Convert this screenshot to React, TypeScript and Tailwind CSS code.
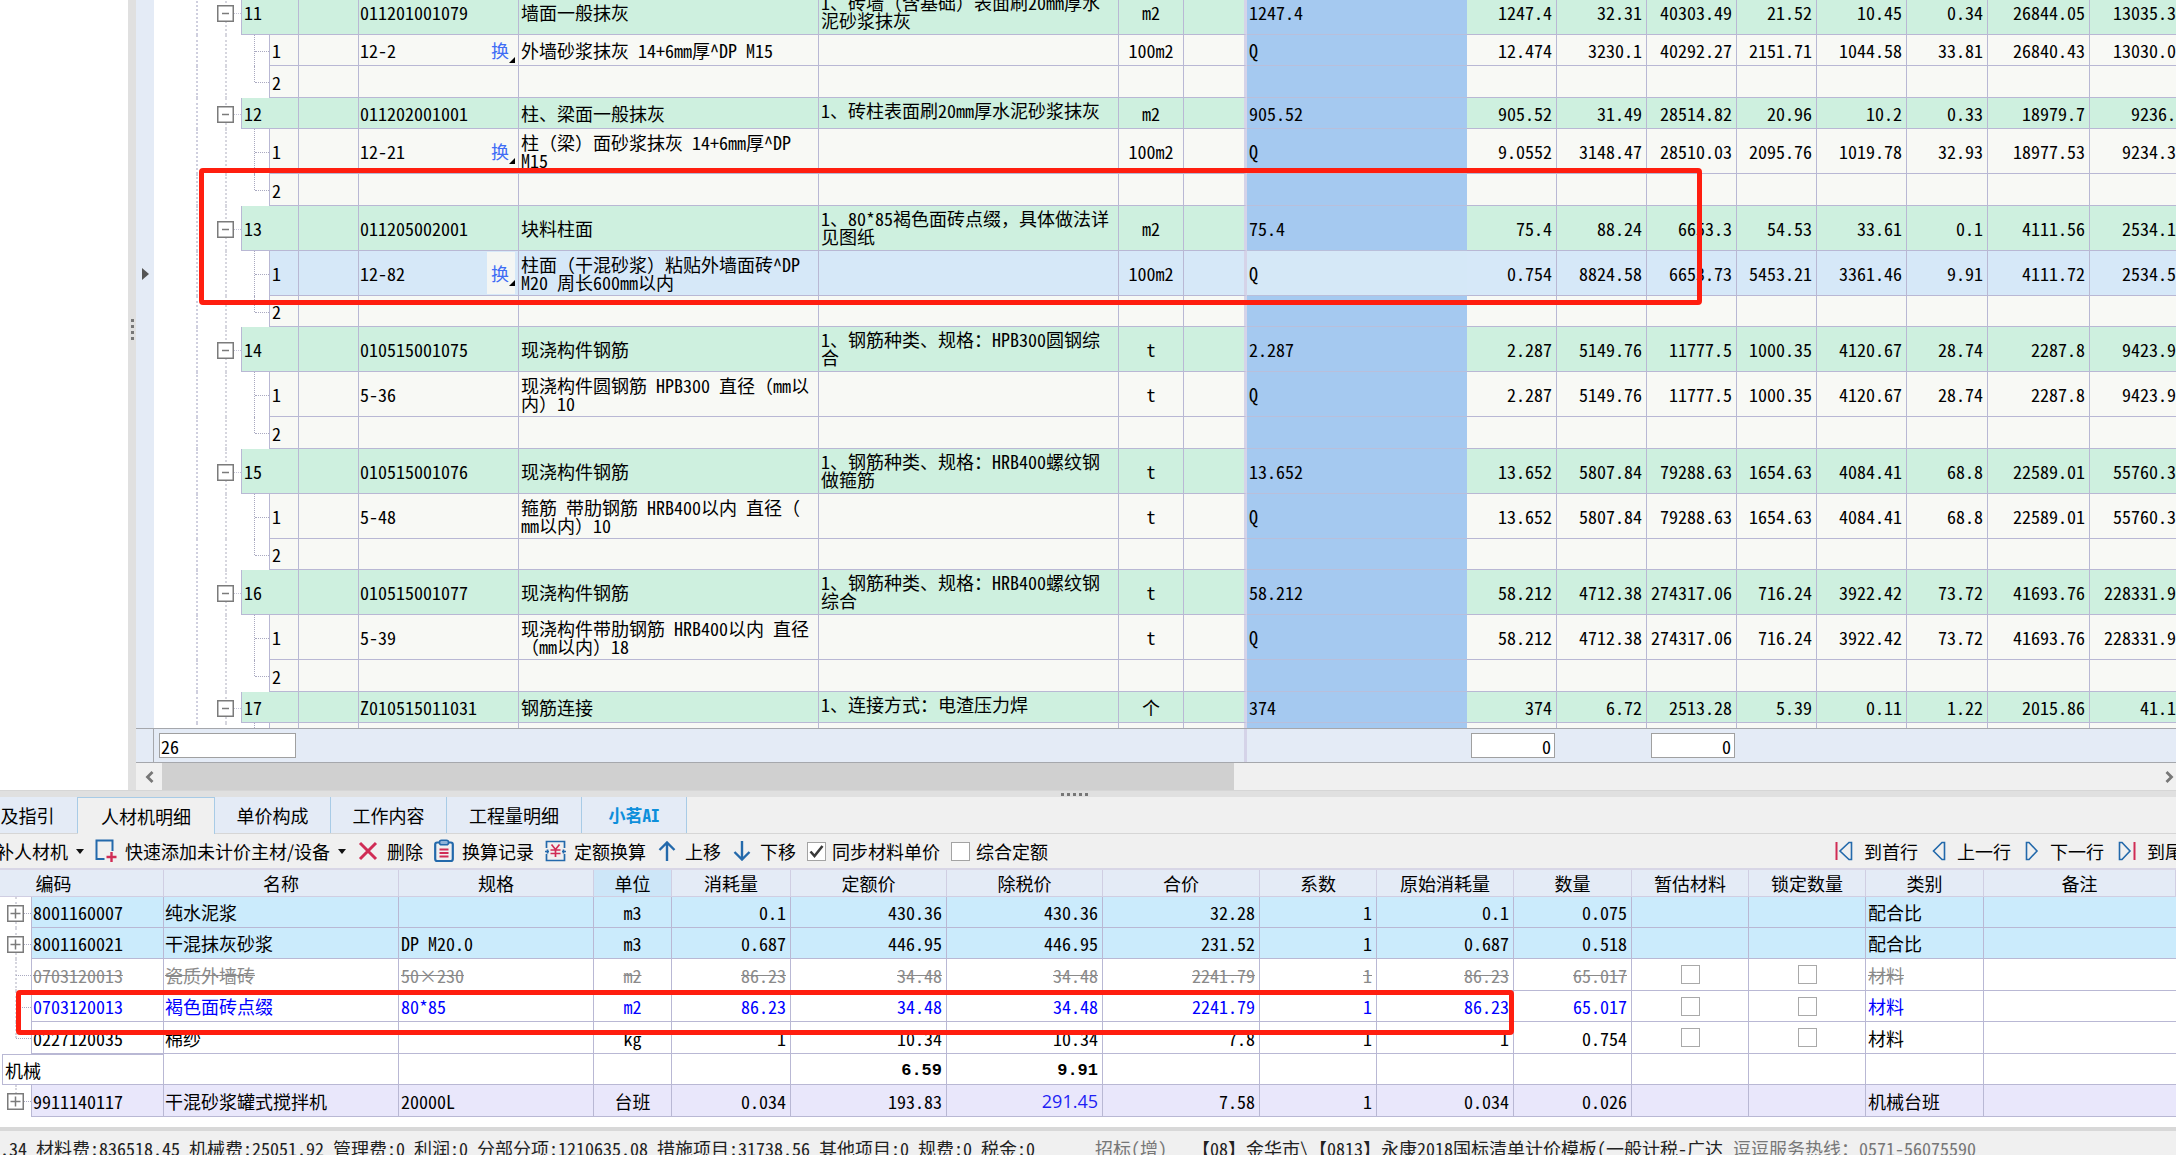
import React from 'react';
import clsx from 'clsx';

type RowKind = 'item' | 'sub' | 'last';

interface CostRow {
  kind: RowKind;
  no: string;
  height: string;
  code?: string;
  swap?: boolean;
  name?: string;
  desc?: string;
  unit?: string;
  expr?: string;
  values?: string[];
  selected?: boolean;
}

interface MaterialRow {
  code: string;
  name: string;
  spec: string;
  unit: string;
  values: string[];
  category: string;
  height: string;
  tone: 'mix' | 'deleted' | 'changed' | 'plain' | 'machine';
  last?: boolean;
}

const SHORT = 'h-[31px]';
const BLANK = 'h-[32px]';
const TALL = 'h-[45px]';

const costRows: CostRow[] = [
  { kind: 'item', no: '11', height: TALL, code: '011201001079', name: '墙面一般抹灰', desc: '1、砖墙（含基础）表面刷20mm厚水\n泥砂浆抹灰', unit: 'm2', expr: '1247.4', values: ['1247.4', '32.31', '40303.49', '21.52', '10.45', '0.34', '26844.05', '13035.3'] },
  { kind: 'sub', no: '1', height: SHORT, code: '12-2', swap: true, name: '外墙砂浆抹灰 14+6mm厚^DP M15', unit: '100m2', expr: 'Q', values: ['12.474', '3230.1', '40292.27', '2151.71', '1044.58', '33.81', '26840.43', '13030.0'] },
  { kind: 'last', no: '2', height: BLANK },
  { kind: 'item', no: '12', height: SHORT, code: '011202001001', name: '柱、梁面一般抹灰', desc: '1、砖柱表面刷20mm厚水泥砂浆抹灰', unit: 'm2', expr: '905.52', values: ['905.52', '31.49', '28514.82', '20.96', '10.2', '0.33', '18979.7', '9236.'] },
  { kind: 'sub', no: '1', height: TALL, code: '12-21', swap: true, name: '柱（梁）面砂浆抹灰 14+6mm厚^DP\nM15', unit: '100m2', expr: 'Q', values: ['9.0552', '3148.47', '28510.03', '2095.76', '1019.78', '32.93', '18977.53', '9234.3'] },
  { kind: 'last', no: '2', height: BLANK },
  { kind: 'item', no: '13', height: TALL, code: '011205002001', name: '块料柱面', desc: '1、80*85褐色面砖点缀，具体做法详\n见图纸', unit: 'm2', expr: '75.4', values: ['75.4', '88.24', '6653.3', '54.53', '33.61', '0.1', '4111.56', '2534.1'] },
  { kind: 'sub', no: '1', height: TALL, code: '12-82', swap: true, name: '柱面（干混砂浆）粘贴外墙面砖^DP\nM20 周长600mm以内', unit: '100m2', expr: 'Q', values: ['0.754', '8824.58', '6653.73', '5453.21', '3361.46', '9.91', '4111.72', '2534.5'], selected: true },
  { kind: 'last', no: '2', height: SHORT },
  { kind: 'item', no: '14', height: TALL, code: '010515001075', name: '现浇构件钢筋', desc: '1、钢筋种类、规格：HPB300圆钢综\n合', unit: 't', expr: '2.287', values: ['2.287', '5149.76', '11777.5', '1000.35', '4120.67', '28.74', '2287.8', '9423.9'] },
  { kind: 'sub', no: '1', height: TALL, code: '5-36', name: '现浇构件圆钢筋 HPB300 直径（mm以\n内）10', unit: 't', expr: 'Q', values: ['2.287', '5149.76', '11777.5', '1000.35', '4120.67', '28.74', '2287.8', '9423.9'] },
  { kind: 'last', no: '2', height: BLANK },
  { kind: 'item', no: '15', height: TALL, code: '010515001076', name: '现浇构件钢筋', desc: '1、钢筋种类、规格：HRB400螺纹钢\n做箍筋', unit: 't', expr: '13.652', values: ['13.652', '5807.84', '79288.63', '1654.63', '4084.41', '68.8', '22589.01', '55760.3'] },
  { kind: 'sub', no: '1', height: TALL, code: '5-48', name: '箍筋 带肋钢筋 HRB400以内 直径（\nmm以内）10', unit: 't', expr: 'Q', values: ['13.652', '5807.84', '79288.63', '1654.63', '4084.41', '68.8', '22589.01', '55760.3'] },
  { kind: 'last', no: '2', height: SHORT },
  { kind: 'item', no: '16', height: TALL, code: '010515001077', name: '现浇构件钢筋', desc: '1、钢筋种类、规格：HRB400螺纹钢\n综合', unit: 't', expr: '58.212', values: ['58.212', '4712.38', '274317.06', '716.24', '3922.42', '73.72', '41693.76', '228331.9'] },
  { kind: 'sub', no: '1', height: TALL, code: '5-39', name: '现浇构件带肋钢筋 HRB400以内 直径\n（mm以内）18', unit: 't', expr: 'Q', values: ['58.212', '4712.38', '274317.06', '716.24', '3922.42', '73.72', '41693.76', '228331.9'] },
  { kind: 'last', no: '2', height: BLANK },
  { kind: 'item', no: '17', height: SHORT, code: 'Z010515011031', name: '钢筋连接', desc: '1、连接方式：电渣压力焊', unit: '个', expr: '374', values: ['374', '6.72', '2513.28', '5.39', '0.11', '1.22', '2015.86', '41.1'] },
  { kind: 'sub', no: '', height: SHORT },
];

const materialRows: MaterialRow[] = [
  { code: '8001160007', name: '纯水泥浆', spec: '', unit: 'm3', values: ['0.1', '430.36', '430.36', '32.28', '1', '0.1', '0.075'], category: '配合比', height: SHORT, tone: 'mix' },
  { code: '8001160021', name: '干混抹灰砂浆', spec: 'DP M20.0', unit: 'm3', values: ['0.687', '446.95', '446.95', '231.52', '1', '0.687', '0.518'], category: '配合比', height: SHORT, tone: 'mix' },
  { code: '0703120013', name: '瓷质外墙砖', spec: '50×230', unit: 'm2', values: ['86.23', '34.48', '34.48', '2241.79', '1', '86.23', '65.017'], category: '材料', height: BLANK, tone: 'deleted' },
  { code: '0703120013', name: '褐色面砖点缀', spec: '80*85', unit: 'm2', values: ['86.23', '34.48', '34.48', '2241.79', '1', '86.23', '65.017'], category: '材料', height: SHORT, tone: 'changed' },
  { code: '0227120035', name: '棉纱', spec: '', unit: 'kg', values: ['1', '10.34', '10.34', '7.8', '1', '1', '0.754'], category: '材料', height: BLANK, tone: 'plain', last: true },
];

const machineRow: MaterialRow = {
  code: '9911140117', name: '干混砂浆罐式搅拌机', spec: '20000L', unit: '台班', values: ['0.034', '193.83', '291.45', '7.58', '1', '0.034', '0.026'], category: '机械台班', height: BLANK, tone: 'machine',
};

const tabs = [
  { label: '及指引', width: 'w-[78px] pr-[22px]' },
  { label: '人材机明细', width: 'w-[137px]', active: true },
  { label: '单价构成', width: 'w-[116px]' },
  { label: '工作内容', width: 'w-[116px]' },
  { label: '工程量明细', width: 'w-[135px]' },
  { label: '小茗AI', width: 'w-[105px]', accent: true },
];

const headers = ['名称', '规格', '单位', '消耗量', '定额价', '除税价', '合价', '系数', '原始消耗量', '数量', '暂估材料', '锁定数量', '类别', '备注'];

const Fold = ({ plus = false, className }: { plus?: boolean; className: string }) => (
  <button aria-label={plus ? '展开' : '折叠'} className={clsx('absolute top-1/2 z-10 -mt-2 block h-[17px] w-[17px] bg-white', className)}>
    <svg viewBox="0 0 17 17" className="h-full w-full" fill="none" stroke="#7b7b7b">
      <rect x="0.75" y="0.75" width="15.5" height="15.5" strokeWidth="1.5" />
      <path d={plus ? 'M3.5 8.5h10M8.5 3.5v10' : 'M5 8.5h7'} strokeWidth="1.5" />
    </svg>
  </button>
);

const CostTree = ({ kind }: { kind: RowKind }) => (
  <>
    <span className="absolute inset-y-0 left-[42px] border-l-2 border-dotted border-[#cfcfde]" />
    <span className="absolute inset-y-0 left-[71px] border-l-2 border-dotted border-[#d6d6de]" />
    {kind === 'item' ? (
      <>
        <Fold className="left-[63px]" />
        <span className="absolute top-1/2 right-0 w-[7px] border-t border-dotted border-[#c3c3d6]" />
      </>
    ) : (
      <>
        <span className={clsx('absolute top-0 left-[100px] border-l border-dotted border-[#a9a9c0]', kind === 'last' ? 'bottom-1/2' : 'bottom-0')} />
        <span className="absolute top-1/2 right-0 w-[14px] border-t border-dotted border-[#a9a9c0]" />
      </>
    )}
  </>
);

const CostLine = ({ row }: { row: CostRow }) => {
  const isItem = row.kind === 'item';
  const bg = row.selected ? 'bg-[#d6e8f8]' : isItem ? 'bg-[#cef0df]' : 'bg-[#f8f9f5]';
  const cell = clsx('overflow-hidden border-r border-b border-[#b9b8d4] p-0', bg);
  return (
    <tr className={row.height}>
      <td className="bg-[#e4ebf6] p-0">
        {row.selected && (
          <svg viewBox="0 0 7 12" className="ml-[6px] h-3 w-[7px]" fill="#555"><path d="M0 0l7 6-7 6z" /></svg>
        )}
      </td>
      <td colSpan={isItem ? 1 : 2} className="relative border-r border-[#b9b8d4] bg-white p-0">
        <CostTree kind={row.kind} />
      </td>
      <td colSpan={isItem ? 2 : 1} className={clsx(cell, 'pl-[2px]')}>{row.no}</td>
      <td className={cell} />
      <td className={clsx(cell, 'pl-px')}>
        <div className="flex items-center justify-between">
          {row.code}
          {row.swap && (
            <button className={clsx('mr-[3px] flex items-end pl-1 text-[#3f6df5]', row.selected && 'bg-[#f4f6f4] py-3')}>
              换
              <svg viewBox="0 0 6 6" className="-mb-1 h-[6px] w-[6px]" fill="#000"><path d="M6 0v6H0z" /></svg>
            </button>
          )}
        </div>
      </td>
      <td className={clsx(cell, 'pl-[2px] whitespace-pre')}>{row.name}</td>
      <td className={clsx(cell, 'pt-[3px] pl-[2px] align-top whitespace-pre')}>{row.desc}</td>
      <td className={clsx(cell, 'text-center')}>{row.unit}</td>
      <td className={clsx('border-r-[3px] border-b border-r-[#d5d3e8] border-b-[#b9b8d4] p-0', bg)} />
      <td className={clsx('border-b border-[#b9bfdb] p-0 pl-[2px]', row.selected ? 'bg-[#d5e8f7]' : 'bg-[#a5c9f0]')}>{row.expr}</td>
      {Array.from({ length: 8 }, (_, i) => (
        <td key={i} className={clsx(cell, 'text-right', i === 7 ? 'border-r-0' : 'pr-1')}>{row.values?.[i]}</td>
      ))}
    </tr>
  );
};

const MaterialLine = ({ row }: { row: MaterialRow }) => {
  const foldable = row.tone === 'mix' || row.tone === 'machine';
  const cell = clsx(
    'border-r border-b border-[#b9b8d4] p-0',
    row.tone === 'mix' && 'bg-[#cbebfc]',
    row.tone === 'machine' && 'bg-[#e9e7fb]',
    row.tone === 'deleted' && 'text-[#8a8a8a] line-through',
    row.tone === 'changed' && 'text-[#0000ff]',
  );
  return (
    <tr className={row.height}>
      <td colSpan={2} className="relative border-r border-[#b9b8d4] p-0">
        <span className={clsx('absolute top-0 left-[15px] border-l-2 border-dotted border-[#d6d6de]', row.last || row.tone === 'machine' ? 'bottom-1/2' : 'bottom-0')} />
        <span className="absolute top-1/2 right-0 w-[15px] border-t border-dotted border-[#a9a9c0]" />
        {foldable && <Fold plus className="left-[7px]" />}
      </td>
      <td className={clsx(cell, 'pl-px')}>{row.code}</td>
      <td className={clsx(cell, 'pl-px')}>{row.name}</td>
      <td className={clsx(cell, 'pl-[2px]')}>{row.spec}</td>
      <td className={clsx(cell, 'text-center')}>{row.unit}</td>
      {row.values.map((value, i) => (
        <td key={i} className={clsx(cell, 'pr-1 text-right')}>
          {row.tone === 'machine' && i === 2 ? <span className="font-['Open_Sans',sans-serif] text-[#1f1ff5]">{value}</span> : value}
        </td>
      ))}
      {['暂估材料', '锁定数量'].map(label => (
        <td key={label} className={cell}>
          {!foldable && (
            <input type="checkbox" aria-label={label} className="mx-auto block h-[19px] w-[19px] appearance-none border border-[#a9a9a9] bg-white" />
          )}
        </td>
      ))}
      <td className={clsx(cell, 'pl-[2px]')}>{row.category}</td>
      <td className={clsx(cell, 'border-r-0')} />
    </tr>
  );
};

const ToolButton = ({ icon, label, caret }: { icon?: React.ReactNode; label: string; caret?: boolean }) => (
  <button className="flex shrink-0 items-center gap-2 whitespace-nowrap">
    {icon}
    {label}
    {caret && <svg viewBox="0 0 8 5" className="h-[5px] w-2" fill="#111"><path d="M0 0h8L4 5z" /></svg>}
  </button>
);

const ToolCheck = ({ label, checked }: { label: string; checked?: boolean }) => (
  <label className="flex shrink-0 items-center gap-1.5 whitespace-nowrap">
    <span className="grid">
      <input type="checkbox" defaultChecked={checked} className="peer h-[19px] w-[19px] appearance-none border border-[#a3a3a3] bg-white [grid-area:1/1]" />
      <svg viewBox="0 0 19 19" className="pointer-events-none invisible h-[19px] w-[19px] [grid-area:1/1] peer-checked:visible" fill="none" stroke="#3a3a3a" strokeWidth="2.6">
        <path d="M3.5 9.5l4 4.5 8-10" />
      </svg>
    </span>
    {label}
  </label>
);

const NavButton = ({ label, next, edge, cut }: { label: string; next?: boolean; edge?: boolean; cut?: boolean }) => (
  <button className="flex shrink-0 items-center gap-[11px] whitespace-nowrap">
    <svg viewBox={edge ? '0 0 18 20' : '0 0 14 20'} className={clsx('h-5 shrink-0', edge ? 'w-[18px]' : 'w-[14px]')} fill="none" strokeWidth="1.6">
      {edge && <path d={next ? 'M16.5 1v18' : 'M1.5 1v18'} stroke="#d02c55" strokeWidth="2" />}
      {next
        ? <path d="M1.5 1.5h2.5l8 8.5-8 8.5H1.5z" stroke="#2369ab" />
        : <path d={edge ? 'M16.5 1.5H14L5 10l9 8.5h2.5z' : 'M12.5 1.5H10L1.5 10l8.5 8.5h2.5z'} stroke="#2369ab" />}
    </svg>
    <span className={clsx(cut && 'w-[29px] overflow-hidden')}>{label}</span>
  </button>
);

const AddIcon = () => (
  <svg viewBox="0 0 22 24" className="h-6 w-[22px]" fill="none">
    <path d="M9.5 20H1.5V1.5h16V12" stroke="#2369ab" strokeWidth="2" />
    <path d="M16.5 13v10M11.5 18h10" stroke="#d02c55" strokeWidth="2.4" />
  </svg>
);

const DeleteIcon = () => (
  <svg viewBox="0 0 22 22" className="h-[22px] w-[22px]" fill="none" stroke="#d02c55" strokeWidth="3">
    <path d="M3 3l16 16M19 3L3 19" />
  </svg>
);

const RecordIcon = () => (
  <svg viewBox="0 0 20 24" className="h-6 w-5" fill="none">
    <rect x="1.2" y="3.5" width="17.6" height="18.5" rx="2" stroke="#2369ab" strokeWidth="2.2" />
    <rect x="5.5" y="1.2" width="9" height="4.6" rx="2" fill="#8fb4d8" stroke="#2369ab" strokeWidth="1.6" />
    <path d="M5.5 10.500h9M5.5 14h9M5.5 17.500h9" stroke="#d02c55" strokeWidth="1.8" />
  </svg>
);

const ConvertIcon = () => (
  <svg viewBox="0 0 21 22" className="h-[22px] w-[21px]" fill="none">
    <path d="M1.5 8V1.5h18V8M1.5 14v6.5h18V14M0 11.5h4M17 11.5h4M2.5 9.5v4M18.5 9.5v4" stroke="#2369ab" strokeWidth="1.7" />
    <path d="M6.5 4.5l4 5 4-5M10.5 9.5V17M5.5 10h10M5.5 13.5h10" stroke="#d02c55" strokeWidth="1.7" />
  </svg>
);

const ArrowIcon = ({ down }: { down?: boolean }) => (
  <svg viewBox="0 0 20 20" className="h-5 w-5" fill="none" stroke="#2369ab" strokeWidth="2.4">
    <path d={down ? 'M10 0v18M2.5 11L10 18.5 17.5 11' : 'M10 20V2M2.5 9L10 1.5 17.5 9'} />
  </svg>
);

const App = () => {
  return (
    <div className="flex h-screen flex-col overflow-hidden bg-[#f0f0f0] font-['Noto_Sans_Mono_CJK_SC','Noto_Sans_CJK_SC',monospace] text-[18px] leading-[18px] text-black">
      <div className="flex min-h-0 flex-1">
        <div className="w-32 shrink-0 bg-white" />
        <div className="flex w-2 shrink-0 flex-col items-center gap-[3px] bg-[#e0e0e0] pt-[319px]">
          {[0, 1, 2, 3].map(i => <span key={i} className="h-[3px] w-[3px] bg-[#777]" />)}
        </div>

        <div className="flex min-w-0 flex-1 flex-col">
          {/* Bill of quantities */}
          <div className="relative min-h-0 flex-1 overflow-hidden">
            <table className="-mt-[10px] w-full table-fixed border-separate border-spacing-0">
              <colgroup>
                <col className="w-[18px]" />
                <col className="w-[88px]" />
                <col className="w-[28px]" />
                <col className="w-[29px]" />
                <col className="w-[60px]" />
                <col className="w-[160px]" />
                <col className="w-[300px]" />
                <col className="w-[300px]" />
                <col className="w-[65px]" />
                <col className="w-[63px]" />
                <col className="w-[220px]" />
                <col className="w-[90px]" />
                <col className="w-[90px]" />
                <col className="w-[90px]" />
                <col className="w-[80px]" />
                <col className="w-[90px]" />
                <col className="w-[81px]" />
                <col className="w-[102px]" />
                <col />
              </colgroup>
              <tbody>
                {costRows.map((row, i) => <CostLine key={i} row={row} />)}
              </tbody>
            </table>
            <div className="pointer-events-none absolute top-[168px] left-[63px] z-20 h-[137px] w-[1503px] rounded border-[5px] border-[#ff1e0f]" />
          </div>

          {/* Summary line */}
          <div className="flex h-[35px] shrink-0 border-y border-[#a5a7ac] bg-[#e4ebf6]">
            <div className="w-[18px] border-r border-[#a5a7ac]" />
            <div className="flex w-[1093px] items-center border-r-[3px] border-[#d5d3e8] pl-[5px]">
              <input aria-label="清单数" defaultValue="26" className="h-[25px] w-[137px] border border-[#a0a0a0] bg-white px-px" />
            </div>
            <div className="flex items-center gap-24 pl-[224px]">
              <input aria-label="工程量" defaultValue="0" className="h-[25px] w-[84px] border border-[#a0a0a0] bg-white px-[3px] text-right" />
              <input aria-label="合价" defaultValue="0" className="h-[25px] w-[84px] border border-[#a0a0a0] bg-white px-[3px] text-right" />
            </div>
          </div>

          {/* Horizontal scroll bar */}
          <div className="flex h-[27px] shrink-0 items-stretch">
            <button aria-label="向左" className="flex w-[26px] items-center justify-center">
              <svg viewBox="0 0 9 12" className="h-3 w-[9px]" fill="none" stroke="#777" strokeWidth="2.8"><path d="M7.5 1l-5 5 5 5" /></svg>
            </button>
            <div className="w-[1072px] bg-[#d0d0d0]" />
            <button aria-label="向右" className="ml-auto flex items-center pr-[2px]">
              <svg viewBox="0 0 9 12" className="h-3 w-[9px]" fill="none" stroke="#777" strokeWidth="2.8"><path d="M1.5 1l5 5-5 5" /></svg>
            </button>
          </div>
        </div>
      </div>

      <div className="flex h-[7px] shrink-0 items-center justify-center gap-[3px] border-t border-[#d6d6d6] bg-[#e0e0e0] pr-[28px]">
        {[0, 1, 2, 3, 4].map(i => <span key={i} className="h-[3px] w-[3px] bg-[#777]" />)}
      </div>

      {/* Detail tabs */}
      <div className="flex h-[37px] shrink-0 border-b border-[#d6d6d6]">
        {tabs.map(tab => (
          <button
            key={tab.label}
            className={clsx(
              'border-r border-[#a8cbe6] whitespace-nowrap',
              tab.width,
              tab.active ? '-mb-px border-t bg-[#f0f0f0]' : 'bg-[#e4ebf6]',
              tab.accent && 'text-[17px] font-bold text-[#0d8fdb]',
            )}
          >
            {tab.label}
          </button>
        ))}
      </div>

      {/* Toolbar */}
      <div className="flex h-[36px] shrink-0 items-center gap-[11px] overflow-hidden border-b-2 border-[#d8d6e6] font-['Noto_Sans_CJK_SC',sans-serif]">
        <div className="-ml-1 flex"><ToolButton label="补人材机" caret /></div>
        <ToolButton icon={<AddIcon />} label="快速添加未计价主材/设备" caret />
        <ToolButton icon={<DeleteIcon />} label="删除" />
        <ToolButton icon={<RecordIcon />} label="换算记录" />
        <ToolButton icon={<ConvertIcon />} label="定额换算" />
        <ToolButton icon={<ArrowIcon />} label="上移" />
        <ToolButton icon={<ArrowIcon down />} label="下移" />
        <ToolCheck label="同步材料单价" checked />
        <ToolCheck label="综合定额" />
        <div className="ml-auto flex gap-[14px]">
          <NavButton label="到首行" edge />
          <NavButton label="上一行" />
          <NavButton label="下一行" next />
          <NavButton label="到尾" next edge cut />
        </div>
      </div>

      {/* Labour, material and machinery */}
      <div className="relative shrink-0 bg-white pb-[10px]">
        <table className="w-full table-fixed border-separate border-spacing-0">
          <colgroup>
            <col className="w-[3px]" />
            <col className="w-[29px]" />
            <col className="w-[132px]" />
            <col className="w-[235px]" />
            <col className="w-[195px]" />
            <col className="w-[78px]" />
            <col className="w-[119px]" />
            <col className="w-[156px]" />
            <col className="w-[156px]" />
            <col className="w-[157px]" />
            <col className="w-[117px]" />
            <col className="w-[137px]" />
            <col className="w-[118px]" />
            <col className="w-[117px]" />
            <col className="w-[117px]" />
            <col className="w-[118px]" />
            <col />
          </colgroup>
          <thead>
            <tr className="h-[27px] bg-[#e4ebf6]">
              <th colSpan={3} className="border-r border-b border-[#d0cee2] p-0 pr-[56px] font-normal">编码</th>
              {headers.map(header => (
                <th key={header} className={clsx('border-r border-b border-[#d0cee2] p-0 font-normal', header === '单位' && 'bg-[#cde6f8]')}>{header}</th>
              ))}
            </tr>
          </thead>
          <tbody>
            {materialRows.map((row, i) => <MaterialLine key={i} row={row} />)}
            <tr className="h-[31px]">
              <td className="border-r border-[#b9b8d4] p-0" />
              <td colSpan={2} className="border-t border-r border-b border-[#b9b8d4] p-0 pl-[2px]">机械</td>
              {Array.from({ length: 14 }, (_, i) => (
                <td key={i} className={clsx('border-r border-b border-[#b9b8d4] p-0 pr-1 text-right', i === 13 && 'border-r-0')}>
                  {(i === 4 || i === 5) && <span className="font-['Liberation_Mono',monospace] text-[17px] font-bold">{i === 4 ? '6.59' : '9.91'}</span>}
                </td>
              ))}
            </tr>
            <MaterialLine row={machineRow} />
          </tbody>
        </table>
        <div className="pointer-events-none absolute top-[120px] left-[16px] z-20 h-[45px] w-[1498px] rounded border-[5px] border-[#ff1e0f]" />
      </div>

      {/* Status bar */}
      <div className="flex h-7 shrink-0 overflow-hidden border-t-4 border-[#d8d8d8] leading-[34px] whitespace-nowrap text-[#222]">
        <span className="w-[1095px]">.34 材料费:836518.45 机械费:25051.92 管理费:0 利润:0 分部分项:1210635.08 措施项目:31738.56 其他项目:0 规费:0 税金:0</span>
        <span className="w-[97px] text-[#777]">招标(增)</span>
        <span className="w-[541px]">【08】金华市\【0813】永康2018国标清单计价模板(一般计税-广达</span>
        <span className="text-[#777]">逗逗服务热线：0571-56075590</span>
      </div>
    </div>
  );
};

export default App;
